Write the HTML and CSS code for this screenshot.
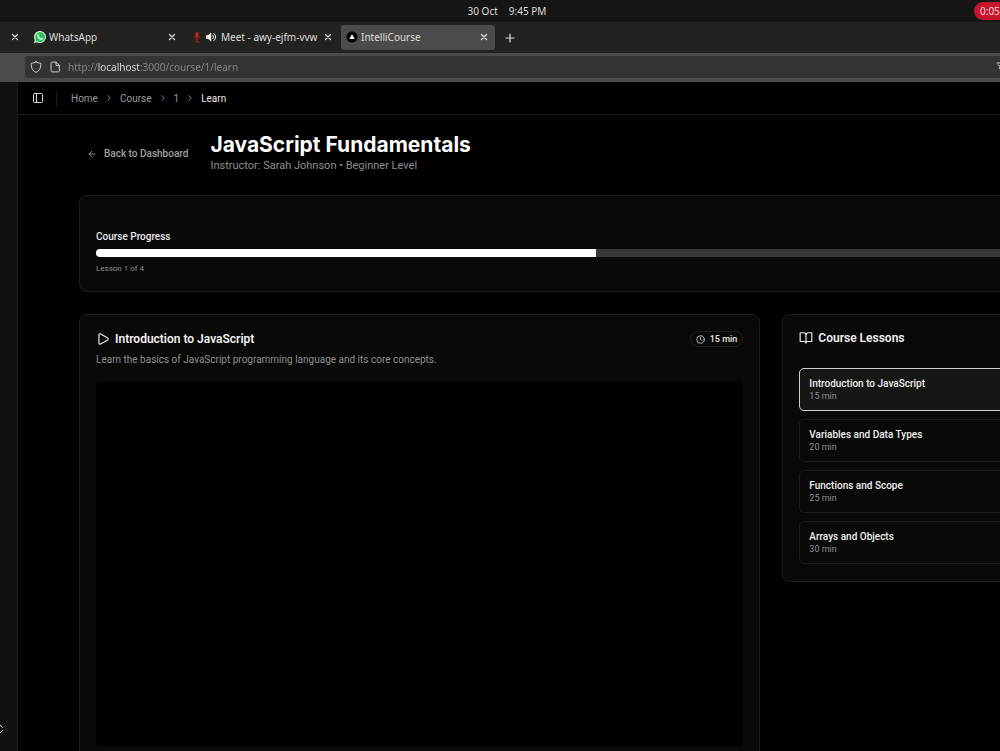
FILE: index.html
```
<!DOCTYPE html>
<html lang="en">
<head>
    <meta charset="UTF-8">
    <meta name="viewport" content="width=device-width, initial-scale=1.0">
    <title>IntelliCourse</title>
    <link rel="stylesheet" href="styles.css">
</head>
<body>
    <!-- Desktop top bar -->
    <div class="system-bar">
        <time>30 Oct</time>
        <time>9:45 PM</time>
        <button class="recording">0:05</button>
    </div>

    <!-- Browser tabs -->
    <div class="tabs">
        <div class="tab tab-cut">
            <button class="close" aria-label="Close tab"><svg viewBox="0 0 8 8"><path d="M1.500 1.500l5 5M6.500 1.500l-5 5"/></svg></button>
        </div>
        <div class="tab">
            <svg class="favicon" viewBox="0 0 24 24"><path fill="#e9f7ee" d="M12 0a12 12 0 0 1 0 24 12 12 0 0 1-6-1.600L0 24l1.700-6A12 12 0 0 1 12 0z"/><path fill="#20c454" d="M12 2a10 10 0 1 1-5 18.600L2.800 21.700 4 17.400A10 10 0 0 1 12 2z"/><path fill="#fff" d="M8.500 6.500c-.8 0-2 1.200-2 2.800 0 3.200 4.700 8.200 8.300 8.200 1.700 0 3-1.200 3-2.600 0-.6-2.300-1.800-2.800-1.600-.6.200-1 1.300-1.500 1.200-1.500-.4-3.500-2.300-4-3.700-.1-.5.900-.9.900-1.600 0-.6-.9-2.700-1.900-2.700z"/></svg>
            <span class="tab-title">WhatsApp</span>
            <button class="close" aria-label="Close tab"><svg viewBox="0 0 8 8"><path d="M1.500 1.500l5 5M6.500 1.500l-5 5"/></svg></button>
        </div>
        <div class="tab tab-meet">
            <svg class="mic" viewBox="0 0 8 12"><rect x="2.500" y="1" width="3" height="6" rx="1.500" fill="#c3261d"/><path d="M1 5.500c0 4 6 4 6 0M4 8.500V11M2 11h4" fill="none" stroke="#a5201a"/></svg>
            <svg class="speaker" viewBox="0 0 12 12"><path fill="#f1f1ef" d="M1 4.200h2L6.200 1.500v9L3 7.800H1z"/><path d="M7.700 4.200c1 1 1 2.600 0 3.600M8.800 2.300c2.400 2 2.400 5.400 0 7.400" fill="none" stroke="#f1f1ef"/></svg>
            <span class="tab-title">Meet - awy-ejfm-vvw</span>
            <button class="close" aria-label="Close tab"><svg viewBox="0 0 8 8"><path d="M1.500 1.500l5 5M6.500 1.500l-5 5"/></svg></button>
        </div>
        <div class="tab active">
            <svg class="favicon" viewBox="0 0 12 12"><circle cx="6" cy="6" r="5.600" fill="#000"/><path fill="#fff" d="M6 3.300l2.700 4.700H3.300z"/></svg>
            <span class="tab-title">IntelliCourse</span>
            <button class="close" aria-label="Close tab"><svg viewBox="0 0 8 8"><path d="M1.500 1.500l5 5M6.500 1.500l-5 5"/></svg></button>
        </div>
        <button class="new-tab" aria-label="New tab"><svg viewBox="0 0 10 10"><path d="M5 1v8M1 5h8"/></svg></button>
    </div>

    <!-- Address bar -->
    <div class="toolbar">
        <div class="address">
            <svg viewBox="0 0 12 12"><path d="M6 .8c1.400 1 2.900 1.300 4.700 1.400.3 4-.8 7.300-4.700 9.200C2.100 9.500 1 6.200 1.300 2.200 3.100 2.100 4.600 1.800 6 .8z"/></svg>
            <svg viewBox="0 0 12 12"><path d="M2 2.200c0-.7.400-1.100 1.100-1.100h4L10.300 4.200v5.600c0 .7-.4 1.100-1.100 1.100H3.100c-.7 0-1.100-.4-1.100-1.100zM7 1.200v3.200h3.200"/></svg>
            <input type="text" aria-label="Address" value="http://localhost:3000/course/1/learn">
            <svg viewBox="0 0 12 12"><path d="M1 2h8M2 4l3 2-2 1 3 2"/></svg>
        </div>
    </div>

    <div class="app">
        <aside class="sidebar">
            <button class="switcher" aria-label="Account menu"><svg viewBox="0 0 24 24"><path d="M7 15l5 5 5-5M7 9l5-5 5 5"/></svg></button>
        </aside>

        <div class="page">
            <header class="page-header">
                <button class="sidebar-toggle" aria-label="Toggle sidebar"><svg viewBox="0 0 24 24"><rect x="3" y="3" width="18" height="18" rx="2"/><path d="M9 3v18"/></svg></button>
                <nav class="breadcrumb">
                    <a href="#">Home</a>
                    <svg viewBox="0 0 24 24"><path d="M9 18l6-6-6-6"/></svg>
                    <a href="#">Course</a>
                    <svg viewBox="0 0 24 24"><path d="M9 18l6-6-6-6"/></svg>
                    <a href="#">1</a>
                    <svg viewBox="0 0 24 24"><path d="M9 18l6-6-6-6"/></svg>
                    <span>Learn</span>
                </nav>
            </header>

            <main>
                <div class="course-header">
                    <a class="back" href="#"><svg viewBox="0 0 24 24"><path d="M12 19l-7-7 7-7M19 12H5"/></svg>Back to Dashboard</a>
                    <div>
                        <h1>JavaScript Fundamentals</h1>
                        <p>Instructor: Sarah Johnson • Beginner Level</p>
                    </div>
                </div>

                <section class="card progress-card">
                    <label for="progress">Course Progress</label>
                    <progress id="progress" value="50" max="100"></progress>
                    <p>Lesson 1 of 4</p>
                </section>

                <div class="columns">
                    <section class="card lesson">
                        <div class="lesson-top">
                            <h2><svg viewBox="0 0 24 24"><path d="M5 5a2 2 0 0 1 3-1.700l12 7a2 2 0 0 1 0 3.400l-12 7A2 2 0 0 1 5 19z"/></svg>Introduction to JavaScript</h2>
                            <span class="badge"><svg viewBox="0 0 24 24"><circle cx="12" cy="12" r="10"/><path d="M12 6v6l4 2"/></svg>15 min</span>
                        </div>
                        <p class="description">Learn the basics of JavaScript programming language and its core concepts.</p>
                        <div class="video"></div>
                    </section>

                    <section class="card lessons">
                        <h2><svg viewBox="0 0 24 24"><path d="M12 7v14M3 18a1 1 0 0 1-1-1V4a1 1 0 0 1 1-1h5a4 4 0 0 1 4 4 4 4 0 0 1 4-4h5a1 1 0 0 1 1 1v13a1 1 0 0 1-1 1h-6a3 3 0 0 0-3 3 3 3 0 0 0-3-3z"/></svg>Course Lessons</h2>
                        <div class="lesson-list">
                            <button class="lesson-item current"><strong>Introduction to JavaScript</strong><span>15 min</span></button>
                            <button class="lesson-item"><strong>Variables and Data Types</strong><span>20 min</span></button>
                            <button class="lesson-item"><strong>Functions and Scope</strong><span>25 min</span></button>
                            <button class="lesson-item"><strong>Arrays and Objects</strong><span>30 min</span></button>
                        </div>
                    </section>
                </div>
            </main>
        </div>
    </div>
</body>
</html>
```
FILE: styles.css
```
* {
    box-sizing: border-box;
}

body {
    margin: 0;
    height: 100vh;
    display: flex;
    flex-direction: column;
    overflow: hidden;
    background: #000;
    color: #f0f0f0;
    font-family: Roboto, "Liberation Sans", sans-serif;
}

h1, h2, p {
    margin: 0;
}

button {
    padding: 0;
    border: none;
    background: none;
    color: inherit;
    font: inherit;
    cursor: pointer;
}

a {
    color: inherit;
    text-decoration: none;
}

svg {
    display: block;
    flex: none;
    fill: none;
    stroke: currentColor;
    stroke-width: 2;
    stroke-linecap: round;
    stroke-linejoin: round;
}

/* Desktop bar */
.system-bar {
    position: relative;
    flex: none;
    height: 22px;
    display: flex;
    align-items: center;
    justify-content: center;
    gap: 11px;
    padding-left: 14px;
    background: #151514;
    color: #dededb;
    font: 10px/12px "Noto Sans", sans-serif;
}

.recording {
    position: absolute;
    top: 2px;
    right: -14px;
    width: 40px;
    height: 18px;
    padding-left: 6px;
    border-radius: 9px;
    background: #c5162e;
    color: #f3d3d6;
    text-align: left;
}

/* Tabs */
.tabs {
    flex: none;
    height: 31px;
    display: flex;
    align-items: center;
    gap: 2px;
    background: #222220;
    color: #dededb;
    font: 10px/12px "Noto Sans", sans-serif;
}

.tab {
    width: 154px;
    height: 25px;
    display: flex;
    align-items: center;
    gap: 3px;
    padding: 0 7px 1px 5px;
    border-radius: 3px;
}

.tab svg {
    stroke-width: 1;
}

.tab-cut {
    width: 27px;
    justify-content: flex-end;
    padding-right: 8px;
}

.tab-meet {
    gap: 4px;
    padding-left: 8px;
}

.tab.active {
    background: #4b4b49;
}

.tab-title {
    flex: 1;
    white-space: nowrap;
}

.favicon {
    width: 12px;
    height: 12px;
}

.tab .favicon {
    stroke: none;
}

.mic {
    width: 8px;
    height: 12px;
}

.speaker {
    width: 12px;
    height: 12px;
}

.mic rect, .speaker path:first-child {
    stroke: none;
}

.close svg {
    width: 8px;
    height: 8px;
    stroke-width: 1.3;
}

.new-tab {
    margin-left: 8px;
}

.new-tab svg {
    width: 10px;
    height: 10px;
    stroke-width: 1.2;
}

/* Address bar */
.toolbar {
    flex: none;
    height: 29px;
    padding: 3px 0 4px 25px;
    background: #4b4b48;
    overflow: hidden;
}

.address {
    height: 22px;
    display: flex;
    align-items: center;
    gap: 7px;
    margin-right: -8px;
    padding-left: 5px;
    border-radius: 3px;
    background: #333331;
    color: #d0d0cd;
}

.address svg {
    width: 12px;
    height: 12px;
    stroke-width: 1;
}

/* The host name stands out from the rest of the address */
.address input {
    flex: 1;
    min-width: 0;
    padding: 0;
    border: none;
    outline: none;
    background: linear-gradient(to right, #898986 30px, #e4e4e1 30px 73px, #898986 73px);
    background-clip: text;
    -webkit-background-clip: text;
    color: transparent;
    font: 10px "Noto Sans", sans-serif;
}

/* App */
.app {
    flex: 1;
    min-height: 0;
    display: flex;
}

.sidebar {
    flex: none;
    width: 18px;
    display: flex;
    flex-direction: column;
    justify-content: flex-end;
    align-items: flex-start;
    padding-bottom: 16px;
    background: #111110;
    border-right: 1px solid #191918;
    overflow: hidden;
}

.switcher {
    margin-left: -6px;
}

.switcher svg {
    width: 12px;
    height: 12px;
}

.page {
    flex: 1;
    min-width: 0;
    overflow: hidden;
}

.page-header {
    height: 33px;
    display: flex;
    align-items: center;
    padding-left: 14px;
    border-bottom: 1px solid #1c1c1b;
}

.sidebar-toggle svg {
    width: 12px;
    height: 12px;
    color: #d8d8d8;
}

.breadcrumb {
    display: flex;
    align-items: center;
    gap: 6px;
    margin-left: 12px;
    padding-left: 14px;
    border-left: 1px solid #1c1c1b;
    color: #9a9a9a;
    font-size: 10px;
    line-height: 15px;
}

.breadcrumb svg {
    width: 10px;
    height: 10px;
}

.breadcrumb span {
    color: #e8e8e8;
}

/* Main area runs past the right edge of the window */
main {
    margin-right: -112px;
    padding: 18px 0 0 61px;
}

.course-header {
    display: flex;
    align-items: center;
    gap: 22px;
    padding-left: 8px;
    margin-bottom: 21px;
}

.back {
    display: flex;
    align-items: center;
    gap: 7px;
    color: #a1a1a1;
    font-size: 10px;
    font-weight: 500;
}

.back svg {
    width: 10px;
    height: 10px;
}

h1 {
    color: #fff;
    font-family: Inter, "Liberation Sans", sans-serif;
    font-size: 21px;
    font-weight: 700;
    line-height: 24px;
}

.course-header p {
    color: #8f8f8f;
    font-size: 11px;
    line-height: 17px;
}

/* Cards */
.card {
    border: 1px solid #1b1b1a;
    border-radius: 8px;
    background: #090908;
}

.progress-card {
    margin-bottom: 22px;
    padding: 34px 16px 15px;
}

.progress-card label {
    display: block;
    margin-bottom: 5px;
    font-size: 10px;
    font-weight: 500;
    line-height: 14px;
    color: #e8e8e8;
}

.progress-card p {
    margin-top: 5px;
    color: #8f8f8f;
    font-size: 8px;
    line-height: 14px;
}

progress {
    display: block;
    width: 100%;
    height: 8px;
    border: none;
    border-radius: 4px;
    background: #393938;
    appearance: none;
    overflow: hidden;
}

progress::-webkit-progress-bar {
    background: #393938;
}

progress::-webkit-progress-value {
    background: #fff;
}

.columns {
    display: grid;
    grid-template-columns: repeat(3, 1fr);
    gap: 22px;
    align-items: start;
}

h2 {
    display: flex;
    align-items: center;
    gap: 5px;
    font-size: 12px;
    font-weight: 600;
    line-height: 16px;
}

h2 svg {
    width: 14px;
    height: 14px;
}

.lesson {
    grid-column: span 2;
    padding: 16px;
}

.lesson-top {
    display: flex;
    align-items: center;
    justify-content: space-between;
}

.badge {
    display: flex;
    align-items: center;
    gap: 5px;
    height: 16px;
    padding: 0 5px;
    border: 1px solid #1f1f1e;
    border-radius: 8px;
    font-size: 9px;
    font-weight: 500;
    color: #e8e8e8;
}

.badge svg {
    width: 9px;
    height: 9px;
}

.description {
    margin: 6px 0 15px;
    color: #8f8f8f;
    font-size: 10px;
    line-height: 14px;
}

.video {
    aspect-ratio: 16 / 9;
    border-radius: 4px;
    background: #000;
}

.lessons {
    padding: 15px 16px 17px;
}

.lesson-list {
    display: flex;
    flex-direction: column;
    gap: 8px;
    margin-top: 22px;
}

.lesson-item {
    display: flex;
    flex-direction: column;
    justify-content: center;
    height: 43px;
    padding: 0 9px;
    border: 1px solid #1b1b1a;
    border-radius: 5px;
    text-align: left;
}

.lesson-item.current {
    border-color: #d0d0d0;
    background: #161615;
}

.lesson-item strong {
    font-size: 10px;
    font-weight: 500;
    line-height: 13px;
}

.lesson-item span {
    color: #8f8f8f;
    font-size: 9px;
    line-height: 12px;
}
```
